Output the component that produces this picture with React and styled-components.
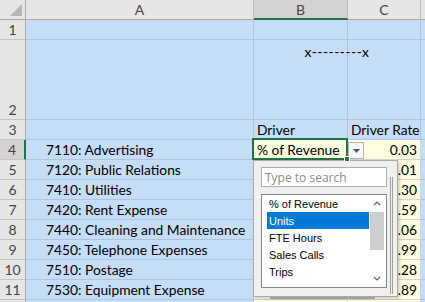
import React from 'react';
import styled, { createGlobalStyle } from 'styled-components';

const GlobalStyle = createGlobalStyle`
  *, *::before, *::after { box-sizing: border-box; }
  html, body { margin: 0; padding: 0; background: #fff; }
  body { font-family: Lato, "Liberation Sans", sans-serif; overflow: hidden; }
`;

const FILL = { blue: '#C5DDF8', yellow: '#FFFFE1', white: '#FFFFFF' };
const LINE = { blue: '#AEC4DF', yellow: '#D4D4D4', white: '#D4D4D4' };

const Sheet = styled.div`
  display: grid;
  grid-template-columns: 26px 228px 94px 73px 1fr;
  grid-template-rows: 20px 20px 80px repeat(10, 20px);
  width: 425px;
  height: 302px;
  overflow: hidden;
  font-size: 13.8px;
  color: #000;
`;

const Corner = styled.div`
  display: flex;
  align-items: flex-end;
  justify-content: flex-end;
  padding: 0 3px 3px 0;
  background: #e6e6e6;
  border-right: 1px solid #ababab;
  border-bottom: 1px solid #ababab;
`;

const ColHead = styled.div`
  display: flex;
  align-items: center;
  justify-content: center;
  background: ${(p) => (p.$active ? '#d3d3d3' : '#e6e6e6')};
  color: #444;
  font-size: 14px;
  border-right: 1px solid #bdbdbd;
  border-bottom: ${(p) => (p.$active ? '2px solid #217346' : '1px solid #ababab')};
`;

const RowHead = styled.div`
  display: flex;
  align-items: flex-end;
  justify-content: center;
  padding-bottom: 1px;
  background: ${(p) => (p.$active ? '#d3d3d3' : '#e6e6e6')};
  color: #444;
  font-size: 14px;
  border-right: ${(p) => (p.$active ? '2px solid #217346' : '1px solid #ababab')};
  border-bottom: 1px solid #c6c6c6;
`;

const Cell = styled.div`
  display: flex;
  align-items: ${(p) => (p.$top ? 'flex-start' : 'flex-end')};
  justify-content: ${(p) => (p.$right ? 'flex-end' : 'flex-start')};
  padding: 0 3px 1px ${(p) => p.$indent || 3}px;
  background: ${(p) => FILL[p.$fill || 'blue']};
  border-right: 1px solid ${(p) => LINE[p.$fill || 'blue']};
  border-bottom: 1px solid ${(p) => LINE[p.$fill || 'blue']};
  white-space: nowrap;
`;

const TitleCell = styled(Cell)`
  grid-column: span 2;
  justify-content: center;
  padding-top: 3px;
  letter-spacing: 0.5px;
  background:
    linear-gradient(to right, transparent 93px, ${LINE.blue} 93px, ${LINE.blue} 94px, transparent 94px),
    ${FILL.blue};
`;

const ActiveCell = styled(Cell)`
  position: relative;
  z-index: 3;
  &::after {
    content: '';
    position: absolute;
    top: -2px;
    left: -2px;
    right: -1px;
    bottom: -1px;
    border: 2px solid #217346;
    pointer-events: none;
  }
`;

const FillHandle = styled.span`
  position: absolute;
  right: -3px;
  bottom: -3px;
  width: 6px;
  height: 6px;
  background: #217346;
  border: 1px solid #fff;
  z-index: 2;
`;

const DropButton = styled.span`
  position: absolute;
  left: calc(100% + 1px);
  top: 2px;
  width: 16px;
  height: 17px;
  display: flex;
  align-items: center;
  justify-content: center;
  background: #f7f7f7;
  border: 1px solid #b4b4b4;
`;

const Panel = styled.div`
  position: absolute;
  left: -1px;
  top: calc(100% + 1px);
  width: 145px;
  height: 137px;
  display: flex;
  flex-direction: column;
  padding: 6px 4px 0 7px;
  background: #f0f0f0;
  border: 1px solid #a9a9a9;
  box-shadow: 2px 2px 3px rgba(0, 0, 0, 0.18);
  font-family: "Liberation Sans", Arial, sans-serif;
  font-size: 11px;
  letter-spacing: 0;
`;

const PanelBody = styled.div`
  display: flex;
  gap: 3px;
`;

const PanelMain = styled.div`
  display: flex;
  flex-direction: column;
  gap: 7px;
  width: 126px;
`;

const Search = styled.div`
  height: 20px;
  display: flex;
  align-items: center;
  padding-left: 3px;
  background: #fff;
  border: 1px solid #abadb3;
  color: #8a8a8a;
  font-family: "Open Sans", "Liberation Sans", sans-serif;
  font-size: 12px;
`;

const List = styled.div`
  height: 94px;
  display: flex;
  background: #fff;
  border: 1px solid #828790;
  padding: 0 1px 0 5px;
`;

const Items = styled.div`
  flex: 1;
  display: flex;
  flex-direction: column;
`;

const Item = styled.div`
  height: 17px;
  display: flex;
  align-items: center;
  padding-left: 2px;
  background: ${(p) => (p.$selected ? '#0078d7' : 'transparent')};
  color: ${(p) => (p.$selected ? '#fff' : '#000')};
`;

const ScrollBar = styled.div`
  width: 16px;
  display: flex;
  flex-direction: column;
  background: #fff;
`;

const ScrollArrow = styled.div`
  height: 17px;
  display: flex;
  align-items: center;
  justify-content: center;
`;

const Thumb = styled.div`
  height: 38px;
  margin: 0 1px;
  background: #cdcdcd;
`;

const Track = styled.div`
  flex: 1;
`;

const VGrip = styled.div`
  width: 3px;
  height: 117px;
  margin-top: 10px;
  border-left: 1px solid #a0a0a0;
  border-right: 1px solid #a0a0a0;
`;

const HGrip = styled.div`
  width: 105px;
  height: 3px;
  margin: 3px 0 0 9px;
  border-top: 1px solid #a0a0a0;
  border-bottom: 1px solid #a0a0a0;
`;

const drivers = ['% of Revenue', 'Units', 'FTE Hours', 'Sales Calls', 'Trips'];

const rows = [
  ['7110: Advertising', '0.03'],
  ['7120: Public Relations', '0.01'],
  ['7410: Utilities', '0.30'],
  ['7420: Rent Expense', '4.59'],
  ['7440: Cleaning and Maintenance', '0.06'],
  ['7450: Telephone Expenses', '4.99'],
  ['7510: Postage', '6.28'],
  ['7530: Equipment Expense', '2.89'],
];

function Chevron({ up }) {
  return (
    <svg width="8" height="5" viewBox="0 0 8 5">
      <path d={up ? 'M1 4 L4 1 L7 4' : 'M1 1 L4 4 L7 1'} fill="none" stroke="#606060" strokeWidth="1.2" />
    </svg>
  );
}

function DriverDropdown() {
  return (
    <Panel>
      <PanelBody>
        <PanelMain>
          <Search>Type to search</Search>
          <List>
            <Items>
              {drivers.map((d) => (
                <Item key={d} $selected={d === 'Units'}>{d}</Item>
              ))}
            </Items>
            <ScrollBar>
              <ScrollArrow><Chevron up /></ScrollArrow>
              <Thumb />
              <Track />
              <ScrollArrow><Chevron /></ScrollArrow>
            </ScrollBar>
          </List>
        </PanelMain>
        <VGrip />
      </PanelBody>
      <HGrip />
    </Panel>
  );
}

export default function App() {
  return (
    <>
      <GlobalStyle />
      <Sheet>
        <Corner>
          <svg width="12" height="12" viewBox="0 0 12 12">
            <polygon points="12,0 12,12 0,12" fill="#b6b6b6" />
          </svg>
        </Corner>
        <ColHead>A</ColHead>
        <ColHead $active>B</ColHead>
        <ColHead>C</ColHead>
        <ColHead />

        <RowHead>1</RowHead>
        <Cell />
        <Cell />
        <Cell />
        <Cell />

        <RowHead>2</RowHead>
        <Cell />
        <TitleCell $top>x---------x</TitleCell>
        <Cell />

        <RowHead>3</RowHead>
        <Cell />
        <Cell>Driver</Cell>
        <Cell>Driver Rate</Cell>
        <Cell />

        {rows.map(([name, rate], i) => (
          <React.Fragment key={name}>
            <RowHead $active={i === 0}>{i + 4}</RowHead>
            <Cell $indent={20}>{name}</Cell>
            {i === 0 ? (
              <ActiveCell $fill="yellow">
                % of Revenue
                <FillHandle />
                <DropButton>
                  <svg width="7" height="4" viewBox="0 0 7 4">
                    <polygon points="0,0 7,0 3.5,4" fill="#555" />
                  </svg>
                </DropButton>
                <DriverDropdown />
              </ActiveCell>
            ) : (
              <Cell $fill="yellow" />
            )}
            <Cell $fill="yellow" $right>{rate}</Cell>
            <Cell />
          </React.Fragment>
        ))}

        <RowHead />
        <Cell />
        <Cell $fill="yellow" />
        <Cell $fill="yellow" />
        <Cell />
      </Sheet>
    </>
  );
}
